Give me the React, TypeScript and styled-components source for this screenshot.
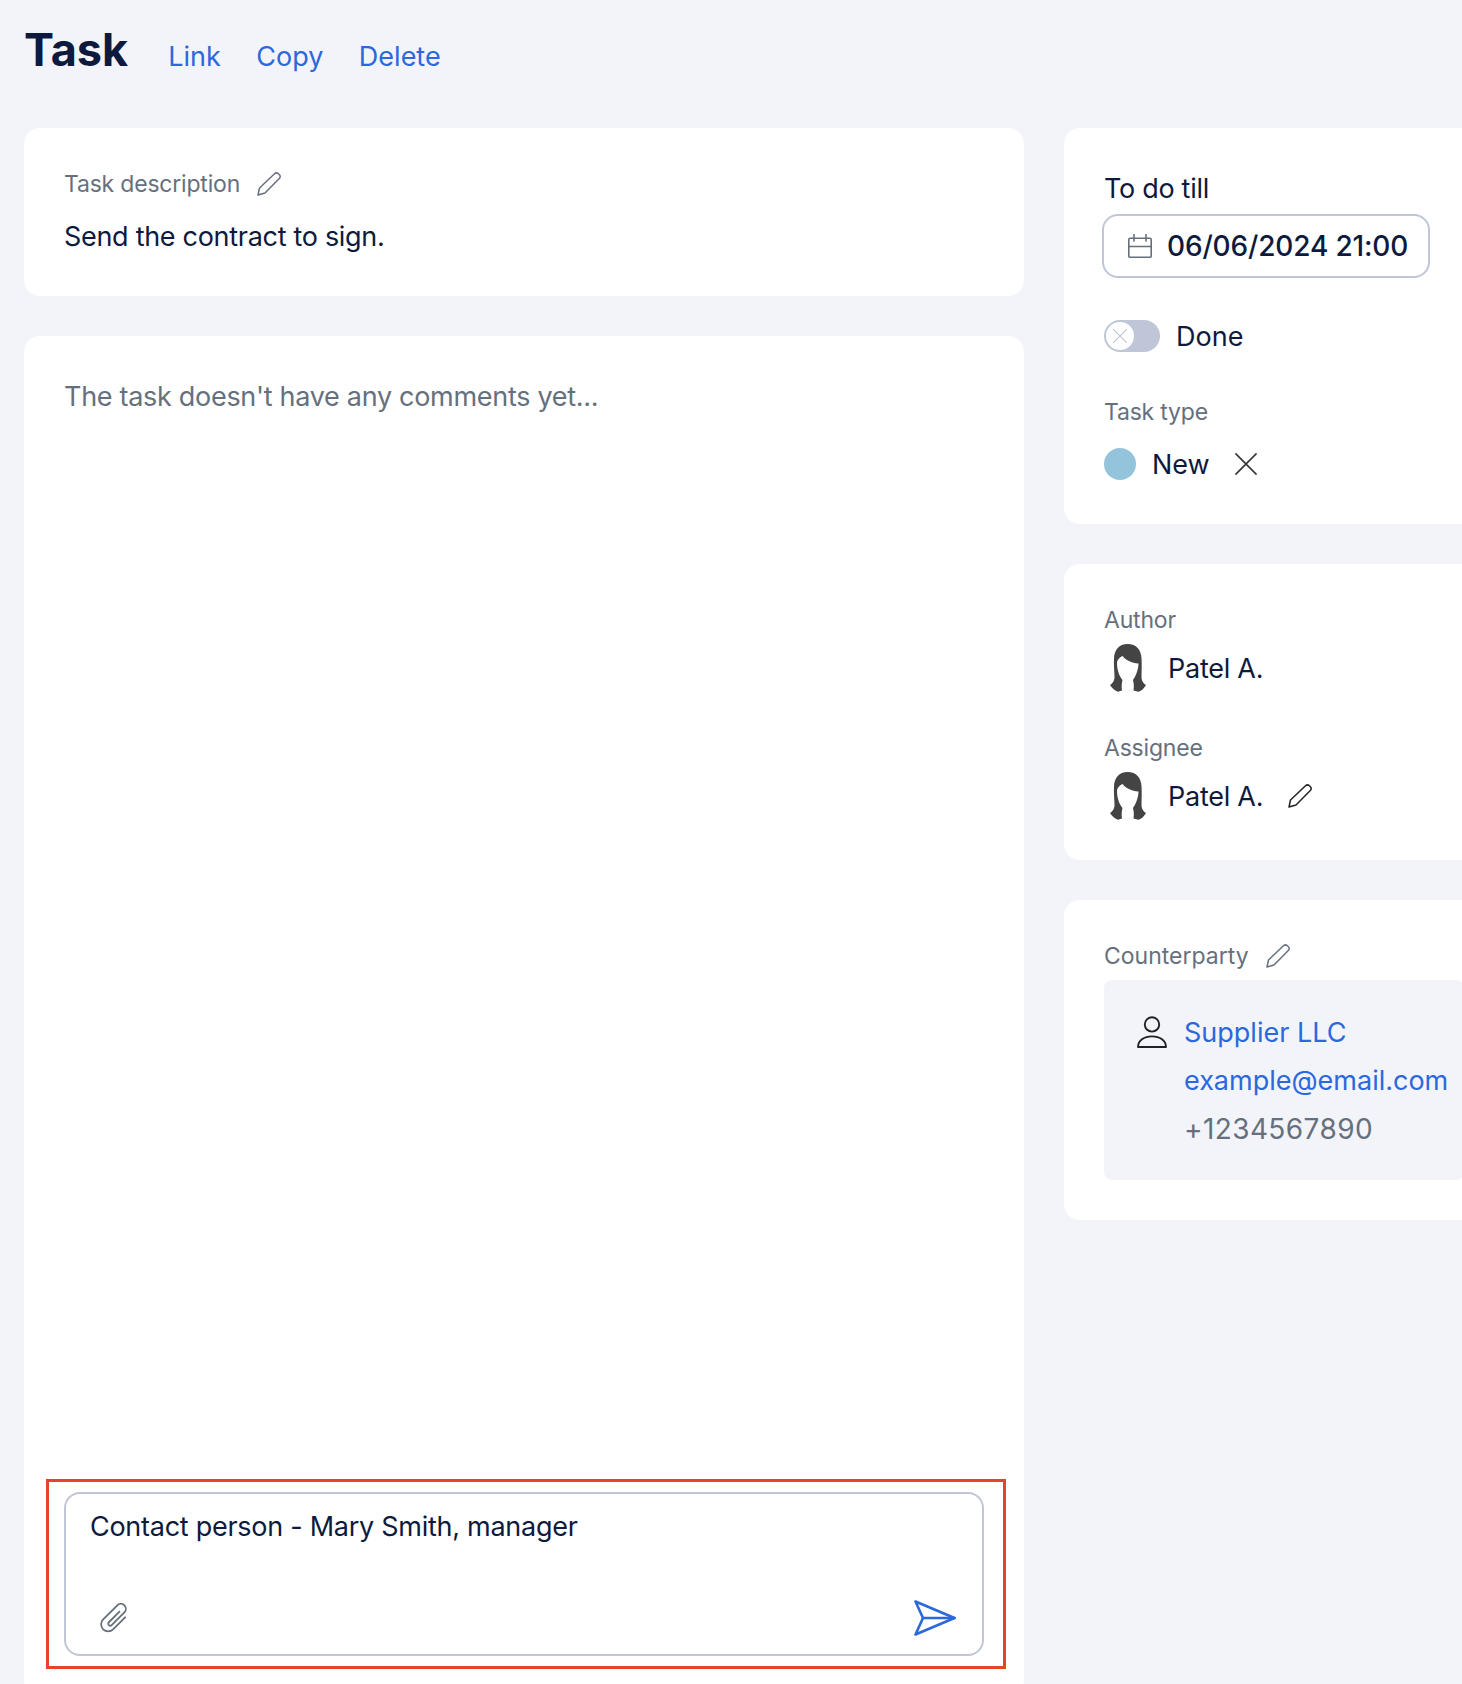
import React from 'react';
import styled, { createGlobalStyle } from 'styled-components';

const GlobalStyle = createGlobalStyle`
  html, body {
    margin: 0;
    width: 1462px;
    height: 1684px;
    overflow: hidden;
    background: #f3f4f9;
  }
  * { box-sizing: border-box; }
`;

const INK = '#0e1a3d';
const BLUE = '#2b68dd';
const GRAY = '#66707d';
const LINE = '#bec6d8';

const Page = styled.div`
  width: 1462px;
  height: 1684px;
  overflow: hidden;
  padding: 0 0 0 24px;
  font-family: Inter, "Liberation Sans", sans-serif;
  color: ${INK};
`;

const Header = styled.header`
  display: flex;
  align-items: center;
  height: 112px;
  margin-bottom: 16px;
`;

const Title = styled.h1`
  margin: 0 40px 12px 0;
  font-size: 45px;
  font-weight: 700;
  line-height: 56px;
`;

const HeaderLinks = styled.nav`
  display: flex;
  gap: 35.5px;
  padding-top: 2px;
`;

const HeaderLink = styled.a`
  font-size: 27px;
  line-height: 40px;
  color: ${BLUE};
`;

const Columns = styled.div`
  display: flex;
  gap: 40px;
  width: 1480px;
`;

const MainColumn = styled.main`
  display: flex;
  flex-direction: column;
  gap: 40px;
  width: 1000px;
  flex: none;
`;

const SideColumn = styled.aside`
  display: flex;
  flex-direction: column;
  gap: 40px;
  width: 440px;
  flex: none;
`;

const Card = styled.section`
  background: #fff;
  border-radius: 16px;
  padding: 40px;
`;

const DescriptionCard = styled(Card)`
  height: 168px;
`;

const CommentsCard = styled(Card)`
  display: flex;
  flex-direction: column;
  height: 1360px;
`;

const TermCard = styled(Card)`
  height: 396px;
`;

const PeopleCard = styled(Card)`
  height: 296px;
`;

const CounterpartyCard = styled(Card)`
  height: 320px;
`;

const Label = styled.div`
  display: flex;
  align-items: center;
  gap: 17px;
  font-size: 23px;
  letter-spacing: -0.2px;
  line-height: 32px;
  color: ${GRAY};
`;

const CounterpartyLabel = styled(Label)`
  letter-spacing: 0;
`;

const Description = styled.p`
  margin: 17px 0 0;
  font-size: 27px;
  letter-spacing: -0.3px;
  line-height: 40px;
`;

const EmptyComments = styled.p`
  margin: 1px 0 0;
  font-size: 27px;
  letter-spacing: -0.3px;
  line-height: 40px;
  color: ${GRAY};
`;

const Composer = styled.div`
  position: relative;
  margin-top: auto;
  display: flex;
  flex-direction: column;
  height: 164px;
  padding: 13px 26px 18px 24px;
  border: 2px solid ${LINE};
  border-radius: 16px;
`;

const Highlight = styled.span`
  position: absolute;
  top: -15px;
  right: -24px;
  bottom: -15px;
  left: -20px;
  border: 3px solid #e8432a;
  pointer-events: none;
`;

const ComposerText = styled.div`
  font-size: 27px;
  letter-spacing: -0.27px;
  line-height: 40px;
`;

const ComposerTools = styled.div`
  margin-top: auto;
  display: flex;
  align-items: center;
  justify-content: space-between;
  padding-left: 10px;
`;

const FieldTitle = styled.div`
  font-size: 27px;
  letter-spacing: -0.3px;
  line-height: 41px;
`;

const DateField = styled.div`
  display: flex;
  align-items: center;
  gap: 15px;
  width: 328px;
  height: 64px;
  margin: 5px 0 42px -2px;
  padding-left: 24px;
  border: 2px solid ${LINE};
  border-radius: 16px;
  font-size: 28px;
  font-weight: 500;
  letter-spacing: -0.15px;
`;

const ToggleRow = styled.div`
  display: flex;
  align-items: center;
  gap: 16px;
  height: 32px;
  margin-bottom: 44px;
  font-size: 27px;
`;

const ToggleTrack = styled.span`
  display: flex;
  align-items: center;
  width: 56px;
  height: 32px;
  padding: 2px;
  border-radius: 16px;
  background: ${LINE};
`;

const ToggleKnob = styled.span`
  display: flex;
  align-items: center;
  justify-content: center;
  width: 28px;
  height: 28px;
  border-radius: 50%;
  background: #fff;
`;

const TypeRow = styled.div`
  display: flex;
  align-items: center;
  height: 32px;
  margin-top: 20px;
  font-size: 27px;
`;

const TypeDot = styled.span`
  width: 32px;
  height: 32px;
  border-radius: 50%;
  background: #93c4dc;
  margin-right: 16px;
`;

const TypeName = styled.span`
  margin-right: 25px;
`;

const PersonRow = styled.div`
  display: flex;
  align-items: center;
  height: 48px;
  margin-top: 8px;
  font-size: 27px;
  letter-spacing: -0.25px;
`;

const AvatarSlot = styled.span`
  display: flex;
  justify-content: center;
  width: 48px;
  margin-right: 16px;
`;

const PersonName = styled.span`
  margin-right: 25px;
`;

const Assignee = styled.div`
  margin-top: 40px;
`;

const ContactBox = styled.div`
  display: flex;
  gap: 17px;
  margin-top: 8px;
  height: 200px;
  padding: 29px 0 0 33px;
  background: #f2f4f9;
  border-radius: 8px;
`;

const ContactIcon = styled.span`
  display: block;
  margin-top: 7px;
  height: 32px;
`;

const ContactLink = styled.div`
  font-size: 27px;
  line-height: 48px;
  color: ${BLUE};
`;

const ContactPhone = styled.div`
  font-size: 28px;
  letter-spacing: 0.4px;
  line-height: 48px;
  color: ${GRAY};
`;

const Icon = styled.svg`
  display: block;
  flex: none;
  fill: none;
  stroke: currentColor;
  stroke-linecap: round;
  stroke-linejoin: round;
`;

const PencilIcon = ({ color }: { color: string }) => (
  <Icon width="24" height="24" viewBox="0 0 24 24" strokeWidth="1.5" style={{ color }}>
    <path d="M1 23 2.500 16 17.500 1.800C18.800.6 20.200.6 21.300 1.700L22.400 2.800C23.500 3.900 23.500 5.300 22.300 6.500L8 21 1 23Z" />
  </Icon>
);

const CalendarIcon = () => (
  <Icon width="24" height="24" viewBox="0 0 24 24" strokeWidth="1.6" style={{ color: GRAY }}>
    <rect x="0.8" y="4.3" width="22.4" height="19" rx="1.4" />
    <path d="M1 12.500h22M6 .6v6.400M18 .6v6.400" />
  </Icon>
);

const CrossIcon = ({ size, color, weight }: { size: number; color: string; weight: number }) => (
  <Icon width={size} height={size} viewBox="0 0 24 24" strokeWidth={weight} style={{ color }}>
    <path d="M1 1l22 22M23 1 1 23" />
  </Icon>
);

const ClipIcon = () => (
  <Icon width="29" height="30" viewBox="0 0 29 30" strokeWidth="1.8" style={{ color: GRAY }}>
    <g transform="translate(14.5 15) rotate(45)">
      <path d="M7 -8V9A7 7 0 0 1 -7 9V-11A5 5 0 0 1 3 -11V7A2 2 0 0 1 -1 7V-8" />
    </g>
  </Icon>
);

const SendIcon = () => (
  <Icon width="42" height="36" viewBox="0 0 42 36" strokeWidth="2.6" style={{ color: BLUE }}>
    <path d="M1.500 1.500 40.500 18 1.500 34.500 9 18 1.500 1.500z" />
    <path d="M9 18h31.500" />
  </Icon>
);

const PersonIcon = () => (
  <Icon width="30" height="32" viewBox="0 0 30 32" strokeWidth="1.9" style={{ color: '#222' }}>
    <circle cx="15" cy="8.400" r="7.200" />
    <path d="M1 31c0-6.500 6-10.600 14-10.600S29 24.500 29 31H1z" />
  </Icon>
);

const Avatar = () => (
  <svg width="36" height="48" viewBox="0 0 36 48" style={{ display: 'block' }}>
    <path
      fill="#444"
      d="M17.700 0C9 0 4.500 6 4 14 3.600 21 4.500 28 4.500 33 4.500 37 2 40 0 41 2 44 5 47 8 47.700L12 46.500C11.500 43 11.500 40 12.500 36 9 32 7 25 7 19 7 16 10 13 12.700 12 15 16 22 19 28.500 19.500 28.500 25 26 32 23 36 24 40 24 43 23.500 46.500L28.500 47.700C32 47 34 44 36 41 34 40 31.500 37 31.500 33 31.500 28 32 21 31.500 14 31 6 26.500 0 17.700 0Z"
    />
  </svg>
);

const App: React.FC = () => {
  return (
    <Page>
      <GlobalStyle />
      <Header>
        <Title>Task</Title>
        <HeaderLinks>
          <HeaderLink>Link</HeaderLink>
          <HeaderLink>Copy</HeaderLink>
          <HeaderLink>Delete</HeaderLink>
        </HeaderLinks>
      </Header>

      <Columns>
        <MainColumn>
          <DescriptionCard>
            <Label>
              Task description
              <PencilIcon color={GRAY} />
            </Label>
            <Description>Send the contract to sign.</Description>
          </DescriptionCard>

          <CommentsCard>
            <EmptyComments>The task doesn't have any comments yet...</EmptyComments>
            <Composer>
              <Highlight />
              <ComposerText>Contact person - Mary Smith, manager</ComposerText>
              <ComposerTools>
                <ClipIcon />
                <SendIcon />
              </ComposerTools>
            </Composer>
          </CommentsCard>
        </MainColumn>

        <SideColumn>
          <TermCard>
            <FieldTitle>To do till</FieldTitle>
            <DateField>
              <CalendarIcon />
              06/06/2024 21:00
            </DateField>
            <ToggleRow>
              <ToggleTrack>
                <ToggleKnob>
                  <CrossIcon size={14} color={LINE} weight={2} />
                </ToggleKnob>
              </ToggleTrack>
              Done
            </ToggleRow>
            <Label>Task type</Label>
            <TypeRow>
              <TypeDot />
              <TypeName>New</TypeName>
              <CrossIcon size={22} color="#333" weight={1.7} />
            </TypeRow>
          </TermCard>

          <PeopleCard>
            <Label>Author</Label>
            <PersonRow>
              <AvatarSlot>
                <Avatar />
              </AvatarSlot>
              <PersonName>Patel A.</PersonName>
            </PersonRow>
            <Assignee>
              <Label>Assignee</Label>
              <PersonRow>
                <AvatarSlot>
                  <Avatar />
                </AvatarSlot>
                <PersonName>Patel A.</PersonName>
                <PencilIcon color="#222" />
              </PersonRow>
            </Assignee>
          </PeopleCard>

          <CounterpartyCard>
            <CounterpartyLabel>
              Counterparty
              <PencilIcon color={GRAY} />
            </CounterpartyLabel>
            <ContactBox>
              <ContactIcon>
                <PersonIcon />
              </ContactIcon>
              <div>
                <ContactLink>Supplier LLC</ContactLink>
                <ContactLink>example@email.com</ContactLink>
                <ContactPhone>+1234567890</ContactPhone>
              </div>
            </ContactBox>
          </CounterpartyCard>
        </SideColumn>
      </Columns>
    </Page>
  );
};

export default App;
